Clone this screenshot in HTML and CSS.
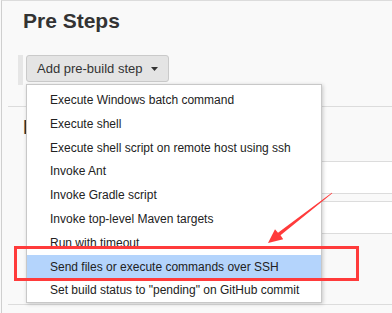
FILE: index.html
```html
<!DOCTYPE html>
<html lang="en">
<head>
    <meta charset="UTF-8">
    <meta name="viewport" content="width=device-width, initial-scale=1.0">
    <title>Pre Steps</title>
    <link rel="stylesheet" href="styles.css">
</head>
<body>

    <!-- Job config panel -->
    <div class="page">
        <div class="section">
            <h2 class="section-title">Pre Steps</h2>
            <div class="step-bar">
                <button class="step-button">
                    Add pre-build step
                    <svg class="caret" width="7" height="4" viewBox="0 0 7 4"><path d="M0 0h7L3.5 4z" fill="#333"/></svg>
                </button>
            </div>
        </div>

        <div class="section section-build">
            <h2 class="section-title">Build</h2>
            <div class="field field-first"></div>
            <div class="field"></div>
        </div>

        <div class="section section-last">
            <h2 class="section-title section-title-post">Post Steps</h2>
        </div>
    </div>

    <!-- Open dropdown menu -->
    <ul class="menu">
        <li class="menu-item">Execute Windows batch command</li>
        <li class="menu-item">Execute shell</li>
        <li class="menu-item">Execute shell script on remote host using ssh</li>
        <li class="menu-item">Invoke Ant</li>
        <li class="menu-item">Invoke Gradle script</li>
        <li class="menu-item">Invoke top-level Maven targets</li>
        <li class="menu-item">Run with timeout</li>
        <li class="menu-item menu-item-active">Send files or execute commands over SSH</li>
        <li class="menu-item">Set build status to "pending" on GitHub commit</li>
    </ul>

    <!-- Red annotation -->
    <svg class="annotation" width="392" height="313" viewBox="0 0 392 313">
        <rect x="15.5" y="247.5" width="342" height="32" fill="none" stroke="#ff3b3b" stroke-width="3"/>
        <polygon points="332.3,193.3 280.5,235.2 283.2,239.3 268,243 275.0,229.3 278.0,232.8 331.8,192.7" fill="#ff3b3b"/>
    </svg>

</body>
</html>
```

FILE: styles.css
```css
html, body {
    height: 313px;
    overflow: hidden;
}

body {
    margin: 0;
    font-family: "Liberation Sans", Arial, sans-serif;
    background-color: #f9f9f9;
    color: #333;
}

.page {
    box-sizing: border-box;
    margin-left: 1px;
    height: 313px;
    overflow: hidden;
    border-left: 1px solid #cfcfcf;
    border-top: 1px solid #dcdcdc;
    padding-left: 6px;
}

.section {
    border-bottom: 1px solid #dcdcdc;
}

.section-last {
    border-bottom: none;
}

.section-title {
    margin: 8px 0 0 15px;
    font-size: 21px;
    line-height: 24px;
    font-weight: bold;
    color: #333;
}

.section-title-post {
    margin-top: 4px;
}

/* Pre steps button */
.step-bar {
    margin: 22px 0 21px 10px;
    height: 30px;
    border-left: 5px solid #e6e6e6;
    padding-left: 3px;
}

.step-button {
    display: flex;
    align-items: center;
    gap: 8px;
    height: 27px;
    padding: 0 10px 0 10px;
    font-family: inherit;
    font-size: 13px;
    color: #333;
    background-color: #e4e4e4;
    border: 1px solid #cacaca;
    border-radius: 3px;
}

.caret {
    margin-top: 1px;
}

/* Build section */
.section-build {
    height: 189px;
}

.field {
    margin-left: 200px;
    height: 31px;
    background-color: #fff;
    border-top: 1px solid #dcdcdc;
    border-bottom: 1px solid #dcdcdc;
}

.field-first {
    margin-top: 22px;
    margin-bottom: 7px;
}

/* Dropdown */
.menu {
    position: absolute;
    left: 26px;
    top: 84px;
    width: 294px;
    margin: 0;
    padding: 3px 0 0 0;
    list-style: none;
    background-color: #fff;
    border: 1px solid #c8c8c8;
    box-shadow: 1px 1px 4px rgba(0, 0, 0, 0.2);
}

.menu-item {
    height: 23.8px;
    line-height: 24px;
    padding-left: 23px;
    font-size: 12px;
    color: #222;
    white-space: nowrap;
}

.menu-item-active {
    background-color: #b4d4fc;
}

.annotation {
    position: absolute;
    left: 0;
    top: 0;
}
```
